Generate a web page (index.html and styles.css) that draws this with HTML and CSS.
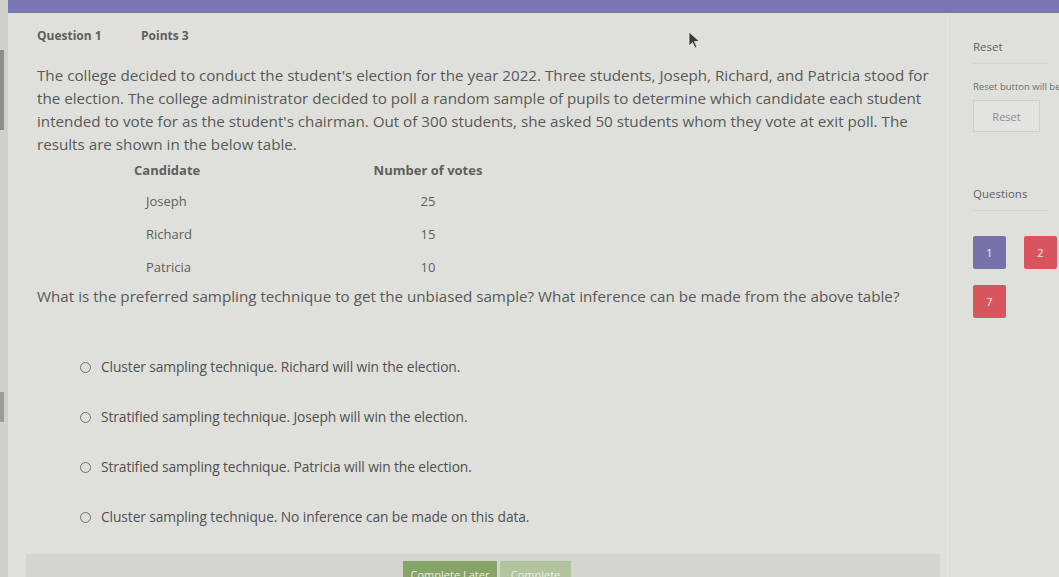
FILE: index.html
```html
<!DOCTYPE html>
<html>
<head>
<meta charset="utf-8">
<link rel="stylesheet" href="styles.css">
</head>
<body>
<div class="frame">
  <div class="edge"><div class="edge-mark m1"></div><div class="edge-mark m2"></div></div>
  <div class="page">
    <div class="topbar"></div>
    <div class="content">
      <div class="main">
        <div class="q">
          <div class="qhead"><span class="qnum">Question 1</span><span class="qpts">Points 3</span></div>
          <p class="stem">The college decided to conduct the student's election for the year 2022. Three students, Joseph, Richard, and Patricia stood for the election. The college administrator decided to poll a random sample of pupils to determine which candidate each student intended to vote for as the student's chairman. Out of 300 students, she asked 50 students whom they vote at exit poll. The results are shown in the below table.</p>
          <div class="table">
            <div class="th c1">Candidate</div><div class="th c2">Number of votes</div>
            <div class="td c1">Joseph</div><div class="td c2">25</div>
            <div class="td c1">Richard</div><div class="td c2">15</div>
            <div class="td c1">Patricia</div><div class="td c2">10</div>
          </div>
          <p class="ask">What is the preferred sampling technique to get the unbiased sample? What inference can be made from the above table?</p>
          <div class="options">
            <label class="opt"><span class="radio"></span><span class="otext">Cluster sampling technique. Richard will win the election.</span></label>
            <label class="opt"><span class="radio"></span><span class="otext">Stratified sampling technique. Joseph will win the election.</span></label>
            <label class="opt"><span class="radio"></span><span class="otext">Stratified sampling technique. Patricia will win the election.</span></label>
            <label class="opt"><span class="radio"></span><span class="otext">Cluster sampling technique. No inference can be made on this data.</span></label>
          </div>
        </div>
        <div class="footer">
          <button class="btn later">Complete Later</button>
          <button class="btn done">Complete</button>
        </div>
      </div>
      <div class="side">
        <div class="shead">Reset</div>
        <div class="snote">Reset button will be enabled</div>
        <button class="reset">Reset</button>
        <div class="shead qs">Questions</div>
        <div class="qgrid">
          <div class="qb cur">1</div>
          <div class="qb bad">2</div>
          <div class="qb bad">7</div>
        </div>
      </div>
    </div>
  </div>
</div>
<svg class="cursor" width="14" height="18" viewBox="0 0 14 18"><path d="M1 1 L1 15 L4.5 11.5 L7 17 L9 16 L6.5 10.5 L11.5 10.5 Z" fill="#3a3a3a" stroke="#e8e8e8" stroke-width="0.8"/></svg>
</body>
</html>
```
FILE: styles.css
```css
html, body {
  margin: 0;
  padding: 0;
}
body {
  background: #dfe0db;
  font-family: "Open Sans", "DejaVu Sans", sans-serif;
  color: #5a5a5a;
  width: 1059px;
  height: 577px;
  overflow: hidden;
  position: relative;
}
.frame {
  display: flex;
  height: 577px;
}
.edge {
  width: 8px;
  flex: none;
  background: #cfd0cb;
  display: flex;
  flex-direction: column;
}
.edge-mark {
  width: 4px;
  background: #8c8e8c;
}
.m1 { height: 80px; margin-top: 50px; }
.m2 { height: 30px; margin-top: 262px; background: #9a9c9a; }
.page {
  flex: 1;
  display: flex;
  flex-direction: column;
  min-width: 0;
}
.topbar {
  height: 13px;
  background: #7a76b4;
  flex: none;
}
.content {
  display: flex;
  flex: 1;
  min-height: 0;
}
.main {
  width: 914px;
  margin-left: 18px;
  flex: none;
  display: flex;
  flex-direction: column;
}
.q {
  padding-left: 11px;
  padding-top: 15px;
}
.qhead {
  font-size: 12px;
  font-weight: 700;
  line-height: 16px;
  color: #5e5e5e;
  display: flex;
}
.qnum { width: 104px; }
.stem {
  margin: 20px 0 0;
  width: 903px;
  font-size: 15.2px;
  line-height: 23px;
  color: #585858;
}
.table {
  display: grid;
  grid-template-columns: 237px 114px;
  grid-template-rows: 28px 33px 33px 33px;
  margin-left: 97px;
  font-size: 13px;
  color: #5e5e5e;
}
.th {
  font-weight: 700;
  display: flex;
  align-items: center;
}
.td {
  display: flex;
  align-items: center;
}
.td.c1 { padding-left: 12px; }
.c2 { justify-content: center; }
.ask {
  margin: 2px 0 0;
  font-size: 15.2px;
  line-height: 23px;
  color: #585858;
}
.options {
  margin-top: 35px;
  padding-left: 43px;
  display: flex;
  flex-direction: column;
}
.opt {
  height: 50px;
  display: flex;
  align-items: center;
}
.radio {
  width: 9px;
  height: 9px;
  border: 1.5px solid #707070;
  border-radius: 50%;
  margin-top: -2px;
  flex: none;
}
.otext {
  margin-left: 10px;
  font-size: 13.8px;
  letter-spacing: -0.1px;
  color: #505050;
  line-height: 16px;
  margin-top: -2px;
}
.footer {
  margin-top: 11px;
  height: 30px;
  background: #d4d5cf;
  display: flex;
  justify-content: center;
  gap: 3px;
  padding-top: 7px;
  padding-left: 8px;
  box-sizing: border-box;
  flex: none;
}
.btn {
  height: 26px;
  border: none;
  font-family: "Open Sans", sans-serif;
  font-size: 11px;
  color: #e8efe0;
  padding: 0 4px;
  white-space: nowrap;
  align-self: flex-start;
}
.later { background: #86a466; width: 94px; }
.done { background: #b3c39d; width: 71px; }
.side {
  flex: 1;
  padding-left: 25px;
  padding-top: 26px;
  min-width: 0;
  overflow: hidden;
  border-left: 1px solid #e6e7e2;
  margin-left: 7px;
}
.shead {
  font-size: 11.5px;
  line-height: 16px;
  color: #606060;
  width: 75px;
  padding-bottom: 8px;
  border-bottom: 1px solid #d2d3ce;
}
.snote {
  margin-top: 16px;
  font-size: 9.5px;
  line-height: 13px;
  white-space: nowrap;
  color: #6c6c6c;
}
.reset {
  margin-top: 7px;
  width: 67px;
  height: 32px;
  background: #e3e4df;
  border: 1px solid #cfd0ca;
  color: #8c8c8c;
  font-family: "Open Sans", sans-serif;
  font-size: 11px;
  display: block;
}
.shead.qs {
  margin-top: 54px;
}
.qgrid {
  margin-top: 25px;
  display: grid;
  grid-template-columns: 33px 33px;
  grid-auto-rows: 33px;
  column-gap: 18px;
  row-gap: 16px;
}
.qb {
  border-radius: 2px;
  color: #f0eef4;
  font-size: 11px;
  display: flex;
  align-items: center;
  justify-content: center;
}
.qb.cur { background: #7572aa; }
.qb.bad { background: #d8555e; }
.cursor {
  position: absolute;
  left: 688px;
  top: 31px;
}
```
